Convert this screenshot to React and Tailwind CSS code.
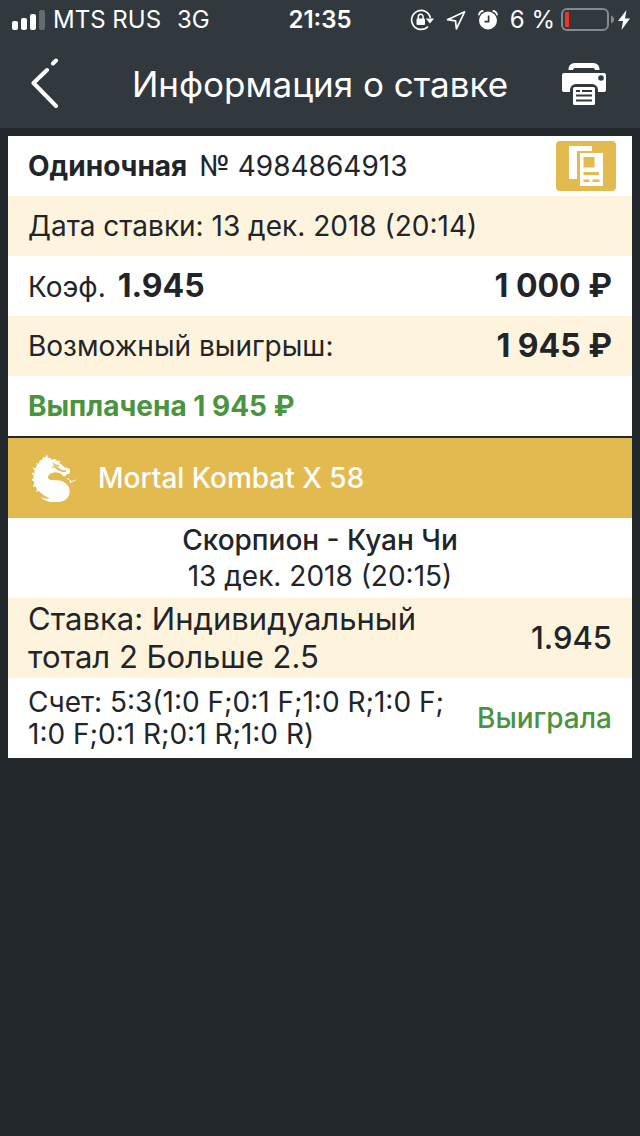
function StatusBar() {
  return (
    <div className="flex h-10 items-center justify-between px-2.5 text-[24px] leading-7">
      <div className="flex flex-1 items-center">
        <svg className="mr-2 ml-0.5 h-5 w-[33px]" viewBox="0 0 33 20" fill="#fff" aria-hidden="true">
          <rect x="0" y="11" width="6" height="9" rx="2" />
          <rect x="9" y="8" width="6" height="12" rx="2" />
          <rect x="18" y="4" width="6" height="16" rx="2" />
          <rect x="27" y="0" width="6" height="20" rx="2" opacity="0.25" />
        </svg>
        <span>MTS RUS</span>
        <span className="ml-4">3G</span>
      </div>
      <time className="font-semibold">21:35</time>
      <div className="flex flex-1 items-center justify-end">
        <svg className="h-[22px] w-6 shrink-0" viewBox="0 0 24 22" fill="none" stroke="#fff" strokeWidth="1.7" aria-hidden="true">
          <path d="M20.400 9A9.500 9.500 0 1 0 18 17.500" />
          <path d="M15.800 9.500H24l-4 5z" fill="#fff" stroke="none" />
          <rect x="6.500" y="9.500" width="8.500" height="6.500" rx="1" fill="#fff" stroke="none" />
          <path d="M8.300 10V7.700a2.400 2.400 0 0 1 4.800 0V10" strokeWidth="1.500" />
        </svg>
        <svg className="ml-3 h-5 w-5 shrink-0" viewBox="0 0 20 20" fill="none" stroke="#fff" strokeWidth="1.700" strokeLinejoin="round" aria-hidden="true">
          <path d="M18.600 1.800 1.500 9.700l8 1.200.9 7.900z" />
        </svg>
        <svg className="ml-3 h-5 w-5 shrink-0" viewBox="0 0 20 20" aria-hidden="true">
          <circle cx="10" cy="10.500" r="9" fill="#fff" />
          <path d="M1 4.500C1.400 2.700 2.800 1.300 4.700.900M19 4.500c-.4-1.800-1.800-3.200-3.700-3.600" fill="none" stroke="#31383e" strokeWidth="4" />
          <path d="M1 4.500C1.400 2.700 2.800 1.300 4.700.900M19 4.500c-.4-1.800-1.800-3.200-3.700-3.600" fill="none" stroke="#fff" strokeWidth="1.800" strokeLinecap="round" />
          <path d="M10.600 5.500v6.100H6.500" fill="none" stroke="#31383e" strokeWidth="1.700" />
        </svg>
        <span className="ml-3 whitespace-nowrap">6 %</span>
        <svg className="ml-1.5 h-6 w-[53px] shrink-0" viewBox="0 0 53 24" aria-hidden="true">
          <rect x="1" y="1" width="46" height="21" rx="5" fill="none" stroke="#848a8e" strokeWidth="2" />
          <path d="M50 7.500c4.200 1.800 4.200 6.400 0 8z" fill="#848a8e" />
          <rect x="4" y="4" width="4" height="15" rx="1" fill="#f03428" />
        </svg>
        <svg className="ml-1 h-5 w-3 shrink-0" viewBox="0 0 12 20" fill="#fff" aria-hidden="true">
          <path d="M8.500 0 0 11h5L3.500 20 12 8.500H7z" />
        </svg>
      </div>
    </div>
  );
}

function PrintIcon() {
  return (
    <svg className="h-[42px] w-11" viewBox="0 0 44 42" aria-hidden="true">
      <path d="M6.500 7V6a6 6 0 0 1 6-6h19a6 6 0 0 1 6 6v1H33a2 2 0 0 0-2-2H13a2 2 0 0 0-2 2z" fill="#fff" />
      <path d="M2 10h40a2 2 0 0 1 2 2v15a2 2 0 0 1-2 2h-6v-2a6 6 0 0 0-6-6H14a6 6 0 0 0-6 6v2H2a2 2 0 0 1-2-2V12a2 2 0 0 1 2-2z" fill="#fff" />
      <circle cx="39" cy="15" r="2.800" fill="#31383e" />
      <rect x="11" y="24" width="22" height="18" rx="1.500" fill="#fff" />
      <path d="M14 28h4M20 28h10M14 32.500h16M14 37.500h16" stroke="#31383e" strokeWidth="1.900" />
    </svg>
  );
}

function CopyIcon() {
  return (
    <svg className="h-10 w-[34px]" viewBox="0 0 34 40" aria-hidden="true">
      <path d="M0 0h23v5H8v28H0z" fill="#fff" />
      <path d="M11 7h23v33H11z" fill="#fff" />
      <path d="M14.500 11h11v10.500h-11zM14.500 26H30v3H14.500zM14.500 33.500h6v2.500h-6zM23.500 33.500h7V36h-7z" fill="#e3ba50" />
    </svg>
  );
}

function DragonIcon() {
  return (
    <svg className="h-12 w-11" viewBox="12 18 132 144" aria-hidden="true">
      <path
        d="M57 19l3 10 10 2-2 5 11-3 9 3-7 4 17-2-5 6 7 5 8 8 16 5 3 8-3 7-8 2-3 5-7 1-3-4-8-5-12-3-9 1c-10 3-15 9-14 15 1 5 6 7 14 7 14 0 29 2 38 9 10 7 14 17 13 28-1 13-8 21-19 26-12 4-26 5-38 3-14-2-25-8-30-14 10 4 21 6 28 2-13-4-26-11-34-22l-8 5 3-9-5-9-8 2 5-9-1-8-9-5 8-5 0-7-8-9 10 2 1-9-7-9 10 3 4-10-3-6 8 2 3-9 9-4 1-8 6 3z"
        fill="#fff"
      />
      <path d="M73 41l8 8 14 3-5 4-12-3z" fill="#e3ba50" />
      <path d="M67 57c11-5 22-2 29 5 7 5 14 6 20 4l-3 5c-9 2-17-1-23-5-7-6-14-8-23-9z" fill="#e3ba50" />
      <path d="M118 92c5 0 7 4 9 7 6 3 10 0 15-3M127 99l1 6" fill="none" stroke="#fff" strokeWidth="3" strokeLinecap="round" />
    </svg>
  );
}

function Row({ tinted = false, tall = false, children }) {
  return (
    <div
      className={`flex items-center justify-between px-5 ${tall ? "min-h-20" : "min-h-15"} ${tinted ? "bg-[#fef4de]" : "bg-white"}`}
    >
      {children}
    </div>
  );
}

export default function App() {
  return (
    <div className="min-h-screen bg-[#23282d] font-['Inter',sans-serif] text-[28px] text-[#212529]">
      <header className="bg-[#31383e] text-white">
        <StatusBar />
        <div className="flex h-22 items-center justify-between px-7">
          <button type="button" aria-label="Назад" className="flex w-14 justify-start">
            <svg className="h-[52px] w-9" viewBox="0 0 36 52" fill="none" stroke="#fff" strokeWidth="4" strokeLinecap="round" strokeLinejoin="round" aria-hidden="true">
              <path d="M19 12 5.500 25 28 48M25 5.500 28 2.500" />
            </svg>
          </button>
          <h1 className="text-[35px] leading-10">Информация о ставке</h1>
          <button type="button" aria-label="Печать" className="flex w-14 justify-end pr-1.5">
            <PrintIcon />
          </button>
        </div>
      </header>

      <main className="flex flex-col gap-0.5 p-2">
        <section>
          <Row>
            <p>
              <b className="mr-3 font-bold">Одиночная</b>№ 4984864913
            </p>
            <button type="button" aria-label="Копировать" className="-mr-1 flex h-[50px] w-15 items-center justify-center rounded bg-[#e3ba50]">
              <CopyIcon />
            </button>
          </Row>
          <Row tinted>
            <p>Дата ставки: 13 дек. 2018 (20:14)</p>
          </Row>
          <Row>
            <p className="flex items-baseline gap-3">
              Коэф. <b className="text-[32px] font-bold">1.945</b>
            </p>
            <b className="text-[32px] font-bold">1 000 ₽</b>
          </Row>
          <Row tinted>
            <p>Возможный выигрыш:</p>
            <b className="text-[32px] font-bold">1 945 ₽</b>
          </Row>
          <Row>
            <p className="font-bold text-[#4a9440]">Выплачена 1 945 ₽</p>
          </Row>
        </section>

        <section>
          <h2 className="flex min-h-20 items-center gap-[22px] bg-[#e3ba50] px-6 font-medium text-white">
            <DragonIcon />
            Mortal Kombat X 58
          </h2>
          <div className="flex min-h-20 flex-col items-center justify-center bg-white leading-9">
            <p className="font-medium">Скорпион - Куан Чи</p>
            <p>13 дек. 2018 (20:15)</p>
          </div>
          <Row tinted tall>
            <p className="max-w-[420px] text-[31px] leading-[38px]">Ставка: Индивидуальный тотал 2 Больше 2.5</p>
            <span className="text-[31px] font-medium">1.945</span>
          </Row>
          <Row tall>
            <p className="max-w-[430px] leading-8">
              Счет: 5:3(1:0 F;0:1 F;1:0 R;1:0 F; 1:0 F;0:1 R;0:1 R;1:0 R)
            </p>
            <span className="font-medium text-[#4a9440]">Выиграла</span>
          </Row>
        </section>
      </main>
    </div>
  );
}
